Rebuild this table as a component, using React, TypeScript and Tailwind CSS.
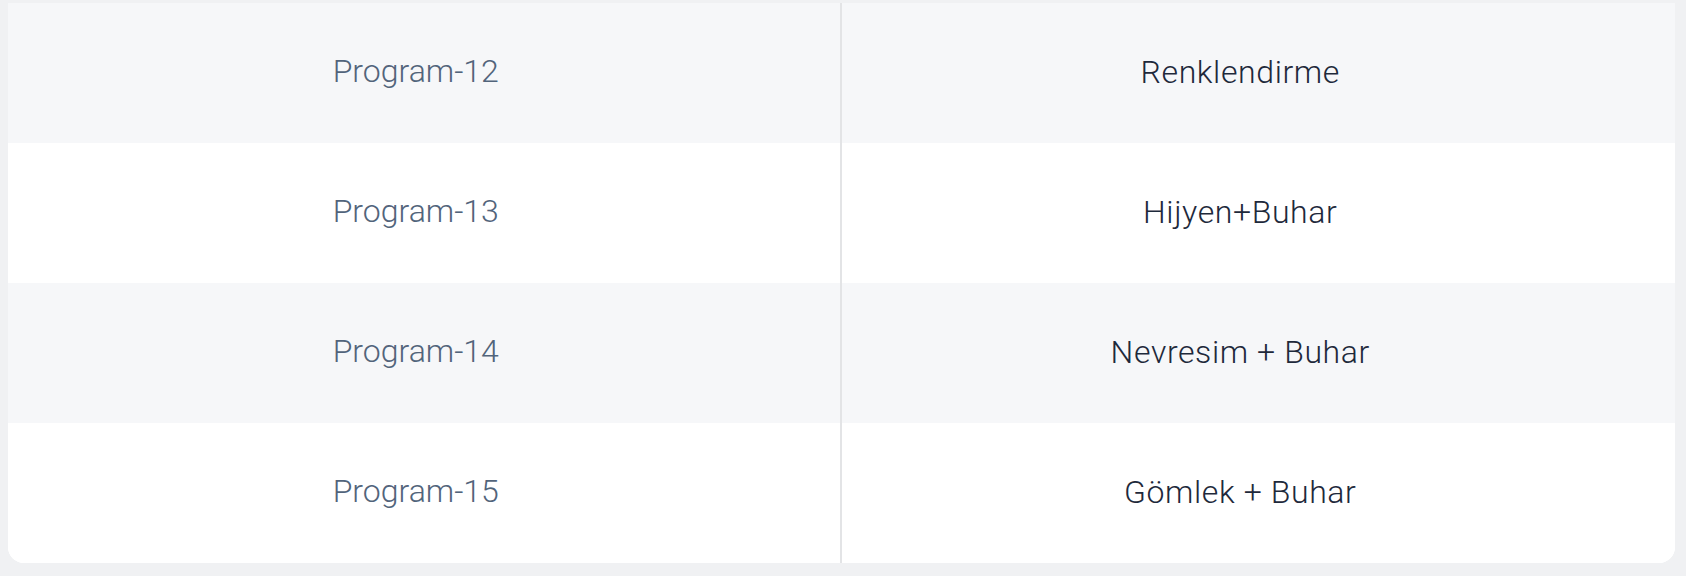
const rows = [
  { program: "Program-12", name: "Renklendirme" },
  { program: "Program-13", name: "Hijyen+Buhar" },
  { program: "Program-14", name: "Nevresim + Buhar" },
  { program: "Program-15", name: "Gömlek + Buhar" },
];

export default function App() {
  return (
    <div className="min-h-screen bg-[#f0f1f3] pt-[3px] pb-[13px] pl-[8px] pr-[11px] font-['Roboto',sans-serif]">
      <div className="overflow-hidden rounded-b-[16px] bg-white">
        {rows.map((row, i) => (
          <div
            key={row.program}
            className={`grid h-[140px] grid-cols-2 ${i % 2 === 0 ? "bg-[#f6f7f9]" : "bg-white"}`}
          >
            <div className="flex items-center justify-center border-r-2 border-[#e3e4e6] pr-[16px] pb-[4px] text-[32px] font-light text-[#52647b]">
              {row.program}
            </div>
            <div className="flex items-center justify-center pr-[36px] pb-[2px] text-[32px] font-light tracking-[0.6px] text-[#1e293b]">
              {row.name}
            </div>
          </div>
        ))}
      </div>
    </div>
  );
}
